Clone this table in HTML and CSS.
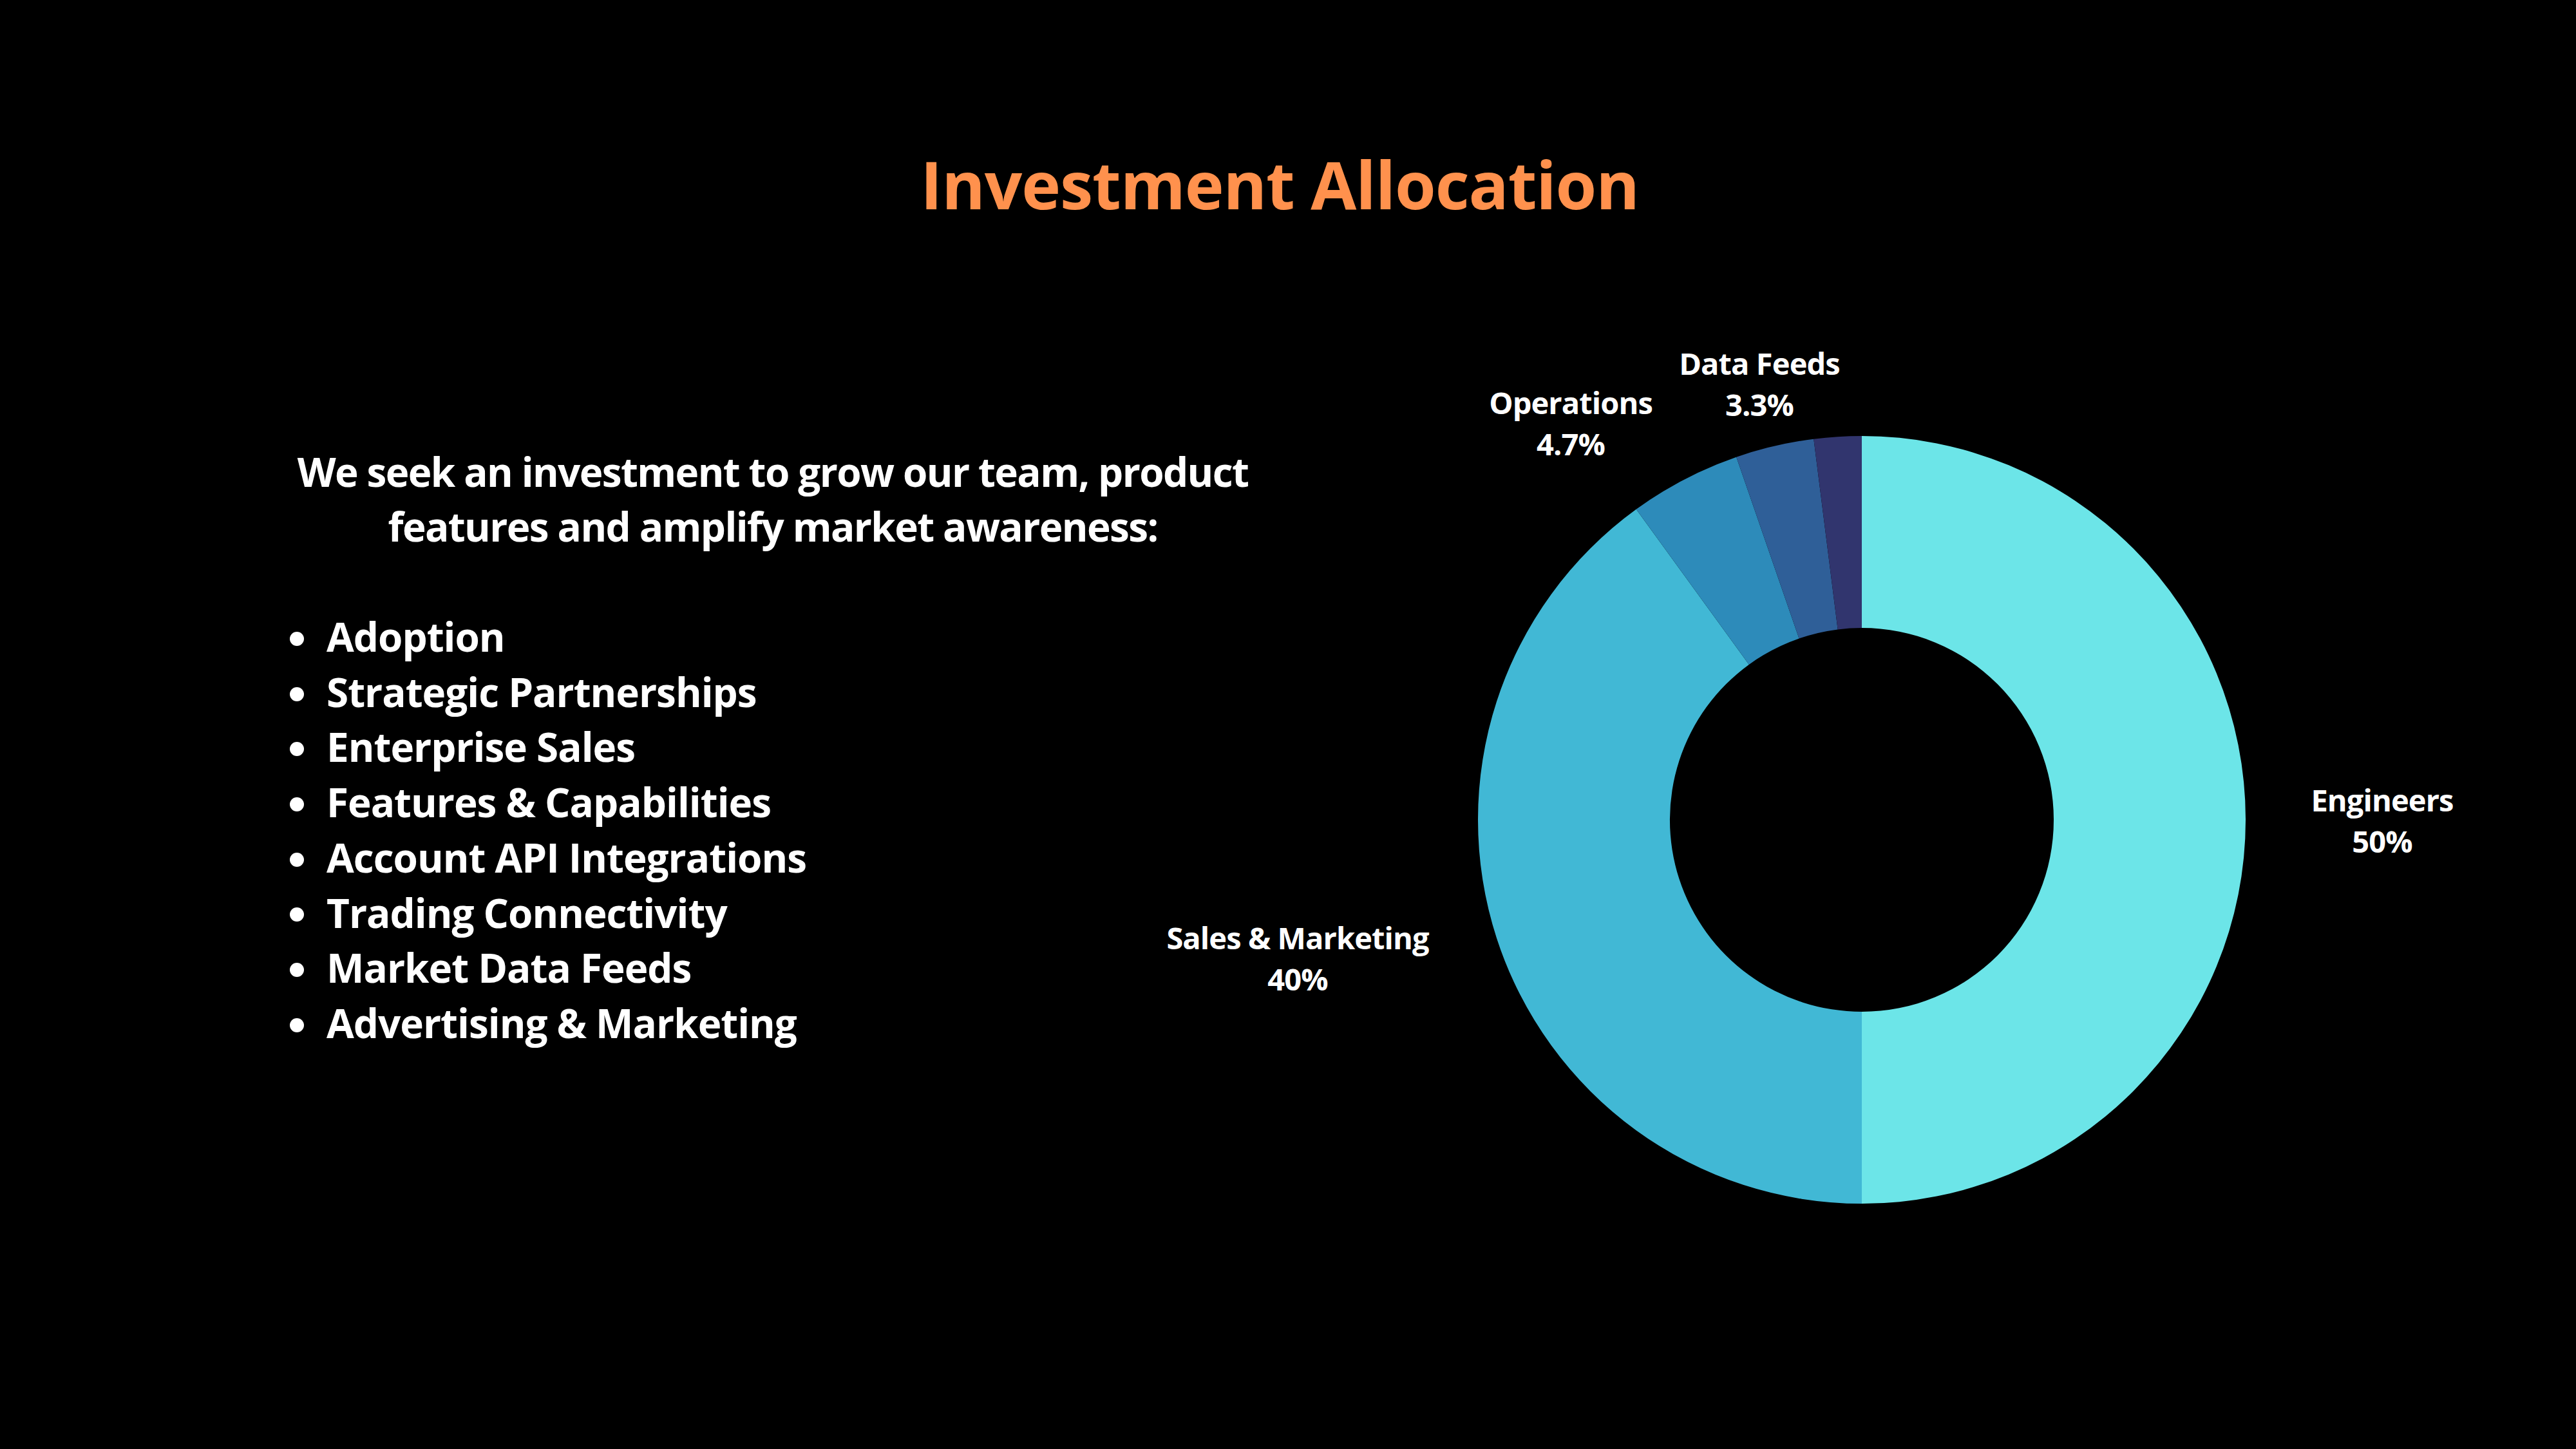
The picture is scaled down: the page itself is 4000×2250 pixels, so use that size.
FILE: index.html
```html
<!DOCTYPE html>
<html lang="en">
<head>
<meta charset="utf-8">
<title>Investment Allocation</title>
<link rel="stylesheet" href="styles.css">
</head>
<body>
<div class="slide">
  <h1 class="title">Investment Allocation</h1>
  <div class="content">
    <section class="left">
      <p class="intro">We seek an investment to grow our team, product<br>features and amplify market awareness:</p>
      <ul class="list">
        <li>Adoption</li>
        <li>Strategic Partnerships</li>
        <li>Enterprise Sales</li>
        <li>Features &amp; Capabilities</li>
        <li>Account API Integrations</li>
        <li>Trading Connectivity</li>
        <li>Market Data Feeds</li>
        <li>Advertising &amp; Marketing</li>
      </ul>
    </section>
    <section class="right">
      <svg class="chart" viewBox="0 0 2000 1500" width="2000" height="1500">
        <path class="s-eng" d="M 891 197 A 596 596 0 0 1 891 1389 L 891 1091 A 298 298 0 0 0 891 495 Z"/>
        <path class="s-sales" d="M 891 1389 A 596 596 0 0 1 540.7 310.8 L 715.8 551.9 A 298 298 0 0 0 891 1091 Z"/>
        <path class="s-ops" d="M 540.7 310.8 A 596 596 0 0 1 696.2 229.7 L 793.6 511.4 A 298 298 0 0 0 715.8 551.9 Z"/>
        <path class="s-data" d="M 696.2 229.7 A 596 596 0 0 1 816.3 201.7 L 853.7 497.4 A 298 298 0 0 0 793.6 511.4 Z"/>
        <path class="s-other" d="M 816.3 201.7 A 596 596 0 0 1 891 197 L 891 495 A 298 298 0 0 0 853.7 497.4 Z"/>
        <text class="label" x="732" y="102">Data Feeds</text>
        <text class="label" x="732" y="166">3.3%</text>
        <text class="label" x="439" y="163">Operations</text>
        <text class="label" x="439" y="227">4.7%</text>
        <text class="label" x="1699" y="780">Engineers</text>
        <text class="label" x="1699" y="844">50%</text>
        <text class="label" x="15" y="994">Sales &amp; Marketing</text>
        <text class="label" x="15" y="1058">40%</text>
      </svg>
    </section>
  </div>
</div>
</body>
</html>
```
FILE: styles.css
```css
html, body {
  margin: 0;
  padding: 0;
  background: #000;
}

.slide {
  width: 4000px;
  height: 2250px;
  background: #000;
  color: #fff;
  display: flex;
  flex-direction: column;
  overflow: hidden;
  font-family: "Open Sans", "Liberation Sans", sans-serif;
}

.title {
  margin: 0;
  padding: 234px 26px 0 0;
  font-size: 103px;
  line-height: 103px;
  font-weight: 700;
  letter-spacing: -1.1px;
  color: #ff914d;
  text-align: center;
}

.content {
  display: flex;
  margin-top: 143px;
}

.left {
  width: 2000px;
  box-sizing: border-box;
  padding: 210px 0 0 440px;
}

.intro {
  width: 1520px;
  margin: 0;
  font-size: 62px;
  line-height: 85px;
  font-weight: 700;
  letter-spacing: -1.6px;
  text-align: center;
  white-space: nowrap;
}

.list {
  list-style: none;
  margin: 86px 0 0;
  padding: 0;
  font-size: 62px;
  line-height: 85.7px;
  font-weight: 700;
  letter-spacing: -1px;
}

.list li {
  display: flex;
  align-items: center;
}

.list li::before {
  content: "";
  flex: none;
  width: 22px;
  height: 22px;
  border-radius: 50%;
  background: #fff;
  margin: 6px 35px 0 10px;
}

.right {
  width: 2000px;
}

.chart {
  display: block;
  overflow: visible;
}

.s-eng { fill: #6ce5e8; }
.s-sales { fill: #41b8d5; }
.s-ops { fill: #2d8bba; }
.s-data { fill: #2f5f98; }
.s-other { fill: #31356e; }

.label {
  font-family: "Open Sans", "Liberation Sans", sans-serif;
  font-size: 47px;
  font-weight: 700;
  letter-spacing: -0.9px;
  fill: #fff;
  text-anchor: middle;
}
```
